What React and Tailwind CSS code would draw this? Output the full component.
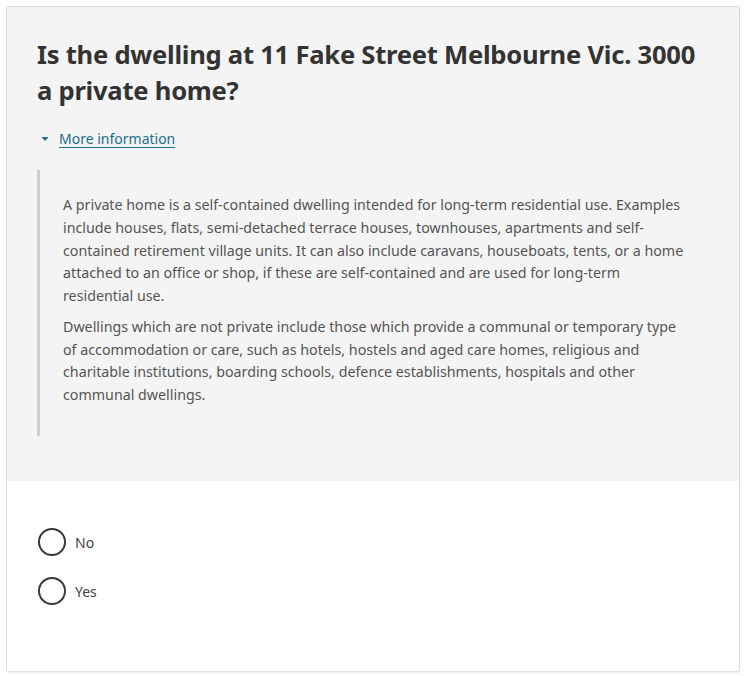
import React, { useState } from 'react'

const font = { fontFamily: '"Noto Sans", "Open Sans", Arial, sans-serif' }

const RadioOption = ({ label, checked, onSelect }) => (
  <label className="flex items-center gap-[9px] cursor-pointer">
    <span className="w-[28px] h-[28px] rounded-full border-2 border-[#3a3a3a] bg-white flex items-center justify-center">
      {checked && <span className="w-[14px] h-[14px] rounded-full bg-[#3a3a3a]" />}
    </span>
    <input type="radio" className="sr-only" checked={checked} onChange={onSelect} />
    <span className="text-[14px] text-[#444]">{label}</span>
  </label>
)

export default function App() {
  const [open, setOpen] = useState(true)
  const [answer, setAnswer] = useState(null)

  return (
    <div className="min-h-screen bg-white p-[6px]" style={font}>
      <div className="border border-[#dcdcdc] rounded-[3px] shadow-[0_1px_2px_rgba(0,0,0,0.08)] overflow-hidden">
        <div className="bg-[#f4f4f4] pl-[30px] pr-[30px] pt-[30px] h-[474px]">
          <h1 className="text-[25.6px] leading-[36px] font-bold text-[#333] tracking-[-0.25px]">
            Is the dwelling at 11 Fake Street Melbourne Vic. 3000 a private home?
          </h1>

          <button
            type="button"
            onClick={() => setOpen(!open)}
            className="mt-[19px] flex items-center gap-[10px] text-[14px] text-[#1d6f8c]"
          >
            <svg width="8" height="8" viewBox="0 0 8 8" className={`ml-[4px] ${open ? '' : '-rotate-90'}`}>
              <path d="M0.5 2 L7.5 2 L4 6 Z" fill="currentColor" />
            </svg>
            <span className="underline underline-offset-[3px]">More information</span>
          </button>

          {open && (
            <div className="mt-[21px] border-l-[3px] border-[#cfcfcf] pl-[23px] pt-[24px] pb-[29px] pr-[22px]">
              <p className="text-[14.25px] leading-[22.75px] text-[#555]">
                A private home is a self-contained dwelling intended for long-term residential use. Examples include houses, flats, semi-detached terrace houses, townhouses, apartments and self-contained retirement village units. It can also include caravans, houseboats, tents, or a home attached to an office or shop, if these are self-contained and are used for long-term residential use.
              </p>
              <p className="mt-[8px] text-[14.25px] leading-[22.75px] text-[#555]">
                Dwellings which are not private include those which provide a communal or temporary type of accommodation or care, such as hotels, hostels and aged care homes, religious and charitable institutions, boarding schools, defence establishments, hospitals and other communal dwellings.
              </p>
            </div>
          )}
        </div>

        <div className="bg-white pl-[31px] pt-[47px] pb-[66px] flex flex-col gap-[21px]">
          <RadioOption label="No" checked={answer === 'no'} onSelect={() => setAnswer('no')} />
          <RadioOption label="Yes" checked={answer === 'yes'} onSelect={() => setAnswer('yes')} />
        </div>
      </div>
    </div>
  )
}
